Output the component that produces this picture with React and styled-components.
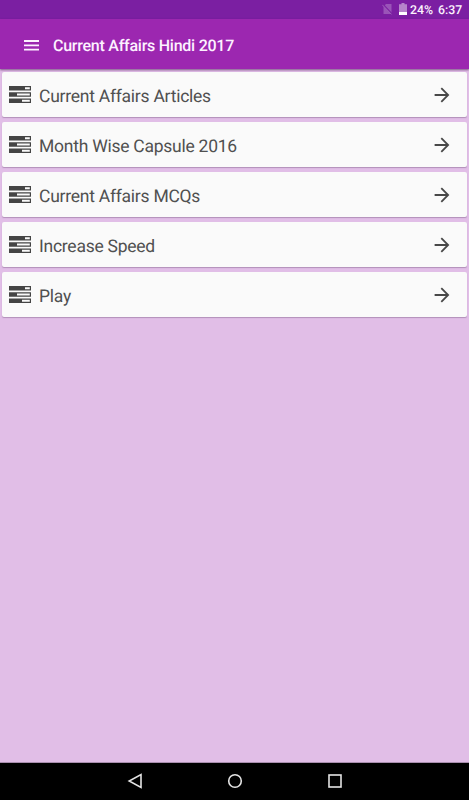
import React from 'react';
import styled, { createGlobalStyle } from 'styled-components';

const GlobalStyle = createGlobalStyle`
  * {
    box-sizing: border-box;
  }
  body {
    margin: 0;
    font-family: Roboto, 'Liberation Sans', sans-serif;
    text-rendering: geometricPrecision;
  }
`;

const Screen = styled.div`
  display: flex;
  flex-direction: column;
  height: 100vh;
  background: #e1bee7;
`;

const StatusBar = styled.div`
  display: flex;
  align-items: center;
  justify-content: flex-end;
  height: 19px;
  padding-right: 7px;
  background: #7b1fa2;
  color: #fbf2fd;
  font-size: 12.3px;
  font-weight: 500;
  line-height: 16px;
`;

const StatusIcon = styled.svg`
  flex: none;
  margin: 0 ${(props) => props.$gap}px 1px 0;
`;

const StatusText = styled.span`
  width: ${(props) => props.$width}px;
  margin-right: ${(props) => props.$gap || 0}px;
  padding-top: 3px;
  white-space: nowrap;
`;

const AppBar = styled.header`
  display: flex;
  align-items: center;
  height: 50px;
  padding: 2px 0 0 24px;
  background: #9c27b0;
  color: #fdf1ff;
  box-shadow: 0 1px 2px rgba(60, 20, 70, 0.6);
  z-index: 1;
`;

const MenuButton = styled.button`
  display: flex;
  padding: 0;
  border: none;
  background: none;
  color: inherit;
`;

const Title = styled.h1`
  margin: 2px 0 0 14px;
  font-size: 16px;
  font-weight: 500;
  line-height: 20px;
  letter-spacing: -0.25px;
`;

const List = styled.main`
  display: flex;
  flex: 1;
  flex-direction: column;
  gap: 5px;
  padding: 3px 2px 0;
`;

const Card = styled.div`
  display: flex;
  align-items: center;
  height: 45px;
  padding: 0 17.5px 0 7px;
  border-radius: 2px;
  background: #fafafa;
  box-shadow: 0 1px 1px rgba(70, 40, 80, 0.3);
`;

const Label = styled.span`
  flex: 1;
  margin: 4px 0 0 8px;
  color: #505050;
  font-size: 17.5px;
  line-height: 20px;
  letter-spacing: -0.25px;
`;

const NavBar = styled.footer`
  display: flex;
  align-items: center;
  justify-content: center;
  gap: 84px;
  height: 38px;
  padding-bottom: 1px;
  border-top: 1px solid #a98fae;
  background: #000;
`;

const NavIcon = styled.svg`
  width: 16px;
  height: 16px;
  fill: none;
  stroke: #e4e4e4;
  stroke-width: 1.6;
`;

const items = [
  'Current Affairs Articles',
  'Month Wise Capsule 2016',
  'Current Affairs MCQs',
  'Increase Speed',
  'Play',
];

const NoSimIcon = () => (
  <StatusIcon $gap={6} width="11" height="12" viewBox="0 0 11 12">
    <path d="M4 1h5.5v10h-8V3.5z" fill="#9a54b8" />
    <path d="M0.8 1.4l9.2 9.6" stroke="#7b1fa2" strokeWidth="1.6" />
    <path d="M0.3 1.8l9.2 9.6" stroke="#a870c2" strokeWidth="0.8" />
  </StatusIcon>
);

const BatteryIcon = () => (
  <StatusIcon $gap={3} width="8" height="12" viewBox="0 0 8 12">
    <path d="M2.5 0h3v1.2H8V12H0V1.2h2.5z" fill="#b684cb" />
    <path d="M0 9h8v3H0z" fill="#fff" />
  </StatusIcon>
);

const MenuIcon = () => (
  <svg width="15" height="11" viewBox="0 0 15 11">
    <path d="M0 1h15M0 5.3h15M0 9.6h15" stroke="currentColor" strokeWidth="1.8" />
  </svg>
);

const TasksIcon = () => (
  <svg width="22" height="17" viewBox="0 0 22 17">
    <path d="M0 0h22v4.6H0zM0 6.2h22v4.6H0zM0 12.4h22V17H0z" fill="#444" />
    <path d="M16 1.3h4.8v2H16zM8 7.5h12.8v2H8zM13 13.7h7.8v2H13z" fill="#fafafa" />
  </svg>
);

const ArrowIcon = () => (
  <svg width="16" height="16" viewBox="0 0 16 16" fill="none" stroke="#484848" strokeWidth="1.8">
    <path d="M0.6 8h13.6M7.3 1.2L14.1 8l-6.8 6.8" />
  </svg>
);

const MenuItem = ({ label }) => {
  return (
    <Card>
      <TasksIcon />
      <Label>{label}</Label>
      <ArrowIcon />
    </Card>
  );
};

const App = () => {
  return (
    <>
      <GlobalStyle />
      <Screen>
        <StatusBar>
          <NoSimIcon />
          <BatteryIcon />
          <StatusText $width={23} $gap={5}>24%</StatusText>
          <StatusText $width={24}>6:37</StatusText>
        </StatusBar>
        <AppBar>
          <MenuButton>
            <MenuIcon />
          </MenuButton>
          <Title>Current Affairs Hindi 2017</Title>
        </AppBar>
        <List>
          {items.map((label) => (
            <MenuItem key={label} label={label} />
          ))}
        </List>
        <NavBar>
          <NavIcon viewBox="0 0 16 16">
            <path d="M14 1.5v13L2.2 8z" />
          </NavIcon>
          <NavIcon viewBox="0 0 16 16">
            <circle cx="8" cy="8" r="6.3" />
          </NavIcon>
          <NavIcon viewBox="0 0 16 16">
            <rect x="2" y="2" width="12" height="12" />
          </NavIcon>
        </NavBar>
      </Screen>
    </>
  );
};

export default App;
